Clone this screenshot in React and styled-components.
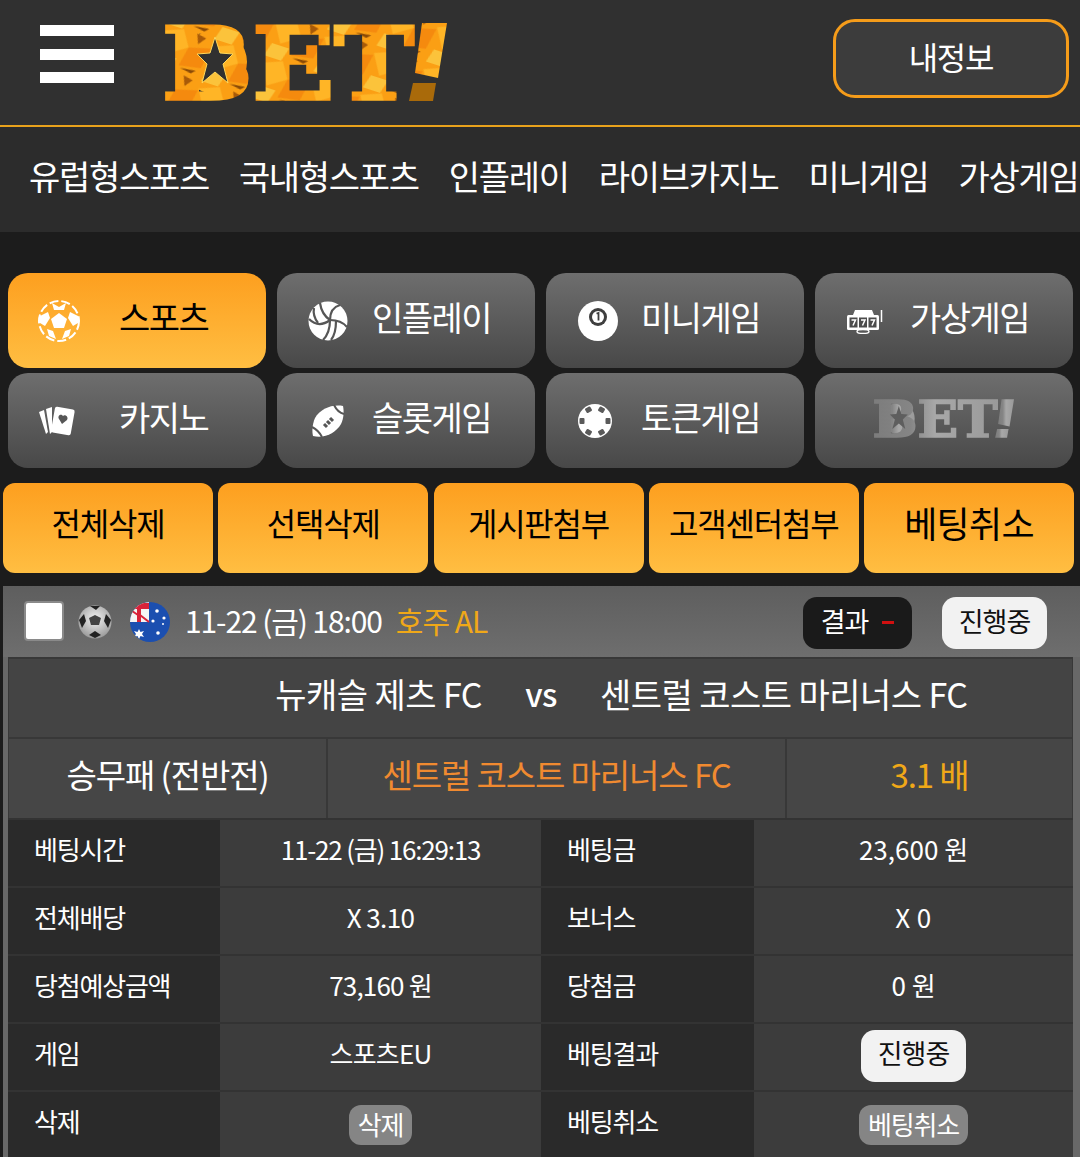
import React from "react";
import styled, { createGlobalStyle } from "styled-components";

const Global = createGlobalStyle`
  html, body { margin: 0; padding: 0; background: #1c1c1c; }
  body { font-family: "Noto Sans CJK KR", "Noto Sans", sans-serif; overflow: hidden; }
  * { box-sizing: border-box; }
`;

const Page = styled.div`
  width: 1080px;
  height: 1157px;
  overflow: hidden;
  background: #1c1c1c;
  color: #fff;
`;

const TopBar = styled.header`
  height: 127px;
  display: flex;
  align-items: flex-start;
  background: #303030;
  border-bottom: 2px solid #e8a21c;
  padding: 19px 11px 0 40px;
`;

const Burger = styled.div`
  width: 74px;
  height: 58px;
  margin-top: 6px;
  display: flex;
  flex-direction: column;
  justify-content: space-between;
  span { display: block; height: 11px; background: #fff; }
`;

const LogoSlot = styled.div`
  margin-left: 51px;
  margin-top: 4px;
  line-height: 0;
`;

const Profile = styled.button`
  margin-left: auto;
  width: 236px;
  height: 79px;
  padding: 0 0 6px;
  border: 3px solid #f59c1a;
  border-radius: 22px;
  background: #3c3c3c;
  color: #fff;
  font: 400 32px "Noto Sans CJK KR", sans-serif;
  letter-spacing: -1.2px;
`;

const Nav = styled.nav`
  height: 105px;
  background: #2c2c2c;
  display: flex;
  align-items: center;
  gap: 30px;
  padding: 0 0 8px 29px;
  white-space: nowrap;
  overflow: hidden;
`;

const NavItem = styled.a`
  font-size: 34px;
  letter-spacing: -1.3px;
  color: #fff;
  flex: none;
`;

const TabGrid = styled.section`
  display: grid;
  grid-template-columns: repeat(4, 258px);
  grid-auto-rows: 95px;
  column-gap: 11px;
  row-gap: 5px;
  padding: 41px 0 0 8px;
`;

const Tab = styled.div`
  border-radius: 20px;
  display: grid;
  grid-template-columns: ${(p) => p.$textAt || 95}px 1fr;
  align-items: center;
  padding-bottom: 8px;
  background: ${(p) =>
    p.$active
      ? "linear-gradient(#fd9f1f, #ffbe42)"
      : "linear-gradient(#6e6e6e, #484848)"};
  color: ${(p) => (p.$active ? "#000" : "#fff")};
  font-size: 34px;
  letter-spacing: -1.5px;
  svg {
    justify-self: start;
    margin-left: ${(p) => p.$iconAt || 31}px;
    margin-top: 8px;
  }
`;

const TabLabel = styled.span`
  text-align: left;
  line-height: 1;
`;

const LogoTab = styled.div`
  border-radius: 20px;
  background: linear-gradient(#6e6e6e, #484848);
  display: flex;
  align-items: center;
  justify-content: center;
  padding-bottom: 4px;
`;

const ActionRow = styled.div`
  display: grid;
  grid-template-columns: repeat(5, 210px);
  column-gap: 5.25px;
  padding: 15px 0 0 3px;
`;

const Action = styled.button`
  height: 90px;
  border: 0;
  padding: 0 0 12px;
  border-radius: 12px;
  background: linear-gradient(#fd9f1f, #ffbe42);
  color: #000;
  font: 400 ${(p) => p.$size || 32}px "Noto Sans CJK KR", sans-serif;
  letter-spacing: ${(p) => p.$ls ?? -1.2}px;
  white-space: nowrap;
`;

const Card = styled.section`
  margin: 13px 0 0 3px;
  padding: 0 7px 0 5px;
  background: #686868;
`;

const CardHead = styled.div`
  height: 71px;
  margin-left: -5px;
  margin-right: -7px;
  padding: 0 33px 0 21px;
  display: flex;
  align-items: center;
  background: linear-gradient(#5e5e5e, #6e6e6e);
`;

const Check = styled.span`
  width: 40px;
  height: 40px;
  flex: none;
  margin-top: -2px;
  background: #fff;
  border: 2px solid #8a8a8a;
  border-radius: 4px;
`;

const When = styled.span`
  margin-left: 14px;
  padding-bottom: 4px;
  font-size: 30px;
  letter-spacing: -1.1px;
  color: #fff;
`;

const League = styled.span`
  margin-left: 14px;
  padding-bottom: 4px;
  font-size: 30px;
  letter-spacing: -1px;
  color: #f0a818;
`;

const Pill = styled.span`
  height: 52px;
  width: ${(p) => p.$w}px;
  margin-left: ${(p) => p.$ml || "0"};
  margin-top: ${(p) => p.$mt || 0}px;
  display: inline-flex;
  align-items: center;
  justify-content: center;
  gap: 14px;
  border-radius: 14px;
  font-size: 27px;
  letter-spacing: -1px;
  background: ${(p) => p.$bg};
  color: ${(p) => p.$fg};
  flex: none;
  padding-bottom: 6px;
`;

const Dash = styled.i`
  width: 12px;
  height: 3px;
  margin-top: 4px;
  background: #d01010;
`;

const MatchRow = styled.div`
  height: 80px;
  display: grid;
  grid-template-columns: 473px 118px 1fr;
  align-items: center;
  background: #444;
  border-top: 2px solid #383838;
  border-left: 1px solid #383838;
  border-right: 1px solid #383838;
  font-size: 34px;
  letter-spacing: -0.55px;
  padding-bottom: 10px;
`;

const Home = styled.span`
  text-align: right;
`;

const Vs = styled.span`
  text-align: center;
  font-size: 32px;
  font-weight: 500;
`;

const PickRow = styled.div`
  height: 81px;
  display: grid;
  grid-template-columns: 317px 459px 1fr;
  border-top: 2px solid #383838;
  background: #383838;
  border-left: 1px solid #383838;
  border-right: 1px solid #383838;
`;

const PickCell = styled.div`
  display: flex;
  align-items: center;
  justify-content: center;
  background: #464646;
  margin-left: ${(p) => (p.$first ? 0 : 2)}px;
  color: ${(p) => p.$color || "#fff"};
  font-size: 33px;
  letter-spacing: -1.1px;
  padding-bottom: 10px;
`;

const Table = styled.div`
  display: grid;
  grid-template-columns: 212px 321px 213px 1fr;
  grid-auto-rows: 68px;
  background: #333;
`;

const Label = styled.div`
  background: #2a2a2a;
  display: flex;
  align-items: center;
  padding: 0 0 10px 26px;
  font-size: 26px;
  letter-spacing: -1.2px;
  border-top: 2px solid #333;
`;

const Value = styled.div`
  background: #3c3c3c;
  display: flex;
  align-items: center;
  justify-content: center;
  padding-bottom: 10px;
  font-size: 26px;
  letter-spacing: ${(p) => p.$ls ?? -1.2}px;
  border-top: 2px solid #333;
`;

const SmallBtn = styled.span`
  height: 40px;
  margin-top: 9px;
  padding: 0 9px 3px;
  display: inline-flex;
  align-items: center;
  border-radius: 12px;
  background: #858585;
  font-size: 26px;
  letter-spacing: -1.2px;
`;

const LogoSvg = styled.svg`
  overflow: visible;
`;

const Logo = ({ w, h, id, grey }) => (
  <LogoSvg width={w} height={h} viewBox="0 0 282 78">
    <defs>
      {grey ? (
        <linearGradient id={id} x1="0" x2="1" y1="0" y2="0">
          <stop offset="0" stopColor="#7c7c7c" />
          <stop offset="0.3" stopColor="#858585" />
          <stop offset="0.5" stopColor="#a8a8a8" />
          <stop offset="1" stopColor="#9a9a9a" />
        </linearGradient>
      ) : (
        <pattern id={id} width="52" height="44" patternUnits="userSpaceOnUse" patternTransform="rotate(18)">
          <rect width="52" height="44" fill="#fb9f14" />
          <path d="M0 8L20 0L30 16L12 28Z" fill="#ffb526" />
          <path d="M30 16L52 10L48 32L26 36Z" fill="#f58a0e" />
          <path d="M4 30L22 30L18 44L0 44Z" fill="#fbc33b" />
          <path d="M34 0L44 2L38 10Z" fill="#a85a08" />
          <path d="M28 38L44 36L40 40Z" fill="#8a4a06" />
        </pattern>
      )}
    </defs>
    <ellipse cx="50" cy="39" rx="32" ry="32" fill={`url(#${id})`} />
    <text
      x="-3"
      y="76"
      fontFamily="'DejaVu Serif', serif"
      fontWeight="700"
      fontSize="100"
      textLength="252"
      lengthAdjust="spacingAndGlyphs"
      fill={`url(#${id})`}
      stroke={`url(#${id})`}
      strokeWidth="3.5"
    >
      BET
    </text>
    <path d="M257 0H282L273 55L250 50Z" fill={`url(#${id})`} />
    <path d="M248 60H271L268 78H244Z" fill={grey ? `url(#${id})` : "#a96a0a"} />
    <path
      d="M50 14L55 30L68 31L58 41L63 60L50 49L37 60L42 41L32 31L45 30Z"
      fill={grey ? "#5e5e5e" : "#303030"}
      stroke={grey ? "none" : "#ffd75a"}
      strokeWidth="1"
    />
  </LogoSvg>
);

const Soccer = () => (
  <svg width="44" height="44" viewBox="0 0 44 44">
    <circle cx="22" cy="22" r="20" fill="none" stroke="#fff" strokeWidth="2" strokeDasharray="9 3" />
    <path d="M22 14L30 20L27 29H17L14 20Z" fill="#fff" />
    <path d="M15 4L22 8L29 4L27 11H17Z" fill="#fff" />
    <path d="M3 17L11 13L13 19L8 27L3 24Z" fill="#fff" />
    <path d="M41 17L33 13L31 19L36 27L41 24Z" fill="#fff" />
    <path d="M10 30L16 32L19 40L12 37Z" fill="#fff" />
    <path d="M34 30L28 32L25 40L32 37Z" fill="#fff" />
  </svg>
);

const Volley = () => (
  <svg width="40" height="42" viewBox="0 0 40 42">
    <circle cx="20" cy="21" r="19.5" fill="#fff" />
    <g fill="none" stroke="#565656" strokeWidth="2.2">
      <path d="M12 3C13 10 16 16 22 20" />
      <path d="M22 20C22 13 25 7 32 5" />
      <path d="M22 20C28 20 34 21 39 27" />
      <path d="M1 19C7 25 14 26 22 20" />
      <path d="M6 8C5 13 7 19 10 23" />
      <path d="M22 20C22 28 20 35 15 40" />
      <path d="M28 21C28 29 27 35 23 40" />
    </g>
  </svg>
);

const Cards = () => (
  <svg width="38" height="32" viewBox="0 0 38 32">
    <path d="M1 7L6 5L10 27L8 29Z" fill="#fff" />
    <path d="M8 4L14 2L14 27L12 29Z" fill="#fff" />
    <rect x="15" y="3" width="20" height="26" rx="2" fill="#fff" transform="rotate(10 25 15)" />
    <path d="M25 11C23 8 19 11 21 14L24 19L29 15C31 12 27 9 25 11Z" fill="#565656" />
  </svg>
);

const Football = () => (
  <svg width="36" height="36" viewBox="0 0 36 36">
    <path d="M33 3C22 1 10 6 5 15C2 22 2 29 3 33C14 36 26 30 31 21C34 15 34 8 33 3Z" fill="#fff" />
    <path d="M24 2C26 6 30 10 34 11M2 24C6 26 10 30 12 34" stroke="#565656" strokeWidth="2" fill="none" />
    <path d="M14 21L17 24M17 18L20 21M20 15L23 18" stroke="#565656" strokeWidth="3" />
  </svg>
);

const Pool = () => (
  <svg width="40" height="42" viewBox="0 0 40 42">
    <circle cx="20" cy="21" r="20" fill="#fff" />
    <circle cx="20" cy="17" r="9" fill="#3f3f3f" />
    <circle cx="20" cy="17" r="6" fill="#fff" />
    <path d="M18.5 13.5L20.5 13V20.5" stroke="#3f3f3f" strokeWidth="1.8" fill="none" />
  </svg>
);

const Slot = () => (
  <svg width="38" height="26" viewBox="0 0 38 26">
    <rect x="1" y="7" width="32" height="15" rx="1.5" fill="#fff" />
    <path d="M7 7L9 2H26L28 7Z" fill="#fff" />
    <path d="M35.5 2V14" stroke="#fff" strokeWidth="1.5" />
    <ellipse cx="17" cy="23.5" rx="6" ry="2" fill="none" stroke="#fff" strokeWidth="1.3" />
    <g fill="#4c4c4c">
      <rect x="3.5" y="9.5" width="8" height="10" />
      <rect x="13" y="9.5" width="8" height="10" />
      <rect x="22.5" y="9.5" width="8" height="10" />
    </g>
    <g fill="none" stroke="#fff" strokeWidth="1.5">
      <path d="M5.5 12H9.5L7 17.5" />
      <path d="M15 12H19L16.5 17.5" />
      <path d="M24.5 12H28.5L26 17.5" />
    </g>
  </svg>
);

const Chip = () => (
  <svg width="36" height="36" viewBox="0 0 36 36">
    <circle cx="18" cy="18" r="17" fill="#fff" />
    <g fill="#5a5a5a">
      {[0, 60, 120, 180, 240, 300].map((a) => (
        <rect key={a} x="15" y="2.5" width="6" height="5" rx="1" transform={`rotate(${a + 30} 18 18)`} />
      ))}
    </g>
  </svg>
);

const MiniBall = () => (
  <svg width="34" height="34" viewBox="0 0 34 34" style={{ flex: "none", marginLeft: 14 }}>
    <defs>
      <radialGradient id="mb" cx="0.5" cy="0.4" r="0.6">
        <stop offset="0" stopColor="#f4f4f4" />
        <stop offset="1" stopColor="#9a9a9a" />
      </radialGradient>
    </defs>
    <circle cx="17" cy="17" r="16.5" fill="url(#mb)" />
    <path d="M17 10L23 13L21 20H13L11 13Z" fill="#444" />
    <path d="M1 15L6 9L8 16L4 23Z" fill="#222" />
    <path d="M33 15L28 9L26 16L30 23Z" fill="#222" />
    <path d="M11 30L17 26L23 30L17 33Z" fill="#222" />
    <path d="M12 1L22 1L18 5Z" fill="#222" />
  </svg>
);

const Flag = () => (
  <svg width="42" height="42" viewBox="0 0 42 42" style={{ flex: "none", marginLeft: 17 }}>
    <defs>
      <clipPath id="fc">
        <circle cx="21" cy="21" r="20" />
      </clipPath>
    </defs>
    <g clipPath="url(#fc)">
      <rect width="42" height="42" fill="#1b4fb0" />
      <rect width="20" height="21" fill="#f4f4f4" />
      <path d="M0 2H20V8H12V21H8V8H0Z" fill="#d8233a" />
      <path d="M0 8L9 14M20 21L11 14" stroke="#d8233a" strokeWidth="2" />
      <path d="M10 28L11.5 31L15 30L13 33L15 36L11.5 35L10 38L8.5 35L5 36L7 33L5 30L8.5 31Z" fill="#fff" />
      <g fill="#fff">
        <circle cx="28" cy="10" r="1.8" />
        <circle cx="35" cy="17" r="1.6" />
        <circle cx="24" cy="20" r="1.6" />
        <circle cx="29" cy="32" r="1.8" />
        <circle cx="34" cy="23" r="1" />
      </g>
    </g>
  </svg>
);

const navItems = ["유럽형스포츠", "국내형스포츠", "인플레이", "라이브카지노", "미니게임", "가상게임"];

const rows = [
  ["베팅시간", "11-22 (금) 16:29:13", -1.2, "베팅금", "23,600 원", 0],
  ["전체배당", "X 3.10", -0.6, "보너스", "X 0", 0.4],
  ["당첨예상금액", "73,160 원", -0.8, "당첨금", "0 원", 0],
  ["게임", "스포츠EU", -0.8, "베팅결과", <Pill key="p" $w={105} $mt={7} $bg="#f2f2f2" $fg="#111">진행중</Pill>],
  ["삭제", <SmallBtn key="d">삭제</SmallBtn>, -1.2, "베팅취소", <SmallBtn key="c">베팅취소</SmallBtn>],
];

export default function App() {
  return (
    <Page>
      <Global />
      <TopBar>
        <Burger><span /><span /><span /></Burger>
        <LogoSlot><Logo w={282} h={78} id="logoMain" /></LogoSlot>
        <Profile>내정보</Profile>
      </TopBar>
      <Nav>
        {navItems.map((n) => <NavItem key={n}>{n}</NavItem>)}
      </Nav>
      <TabGrid>
        <Tab $active $textAt={111} $iconAt={29}>
          <Soccer />
          <TabLabel>스포츠</TabLabel>
        </Tab>
        <Tab><Volley /><TabLabel>인플레이</TabLabel></Tab>
        <Tab $iconAt={32}><Pool /><TabLabel>미니게임</TabLabel></Tab>
        <Tab><Slot /><TabLabel>가상게임</TabLabel></Tab>
        <Tab $textAt={111} $iconAt={30}><Cards /><TabLabel>카지노</TabLabel></Tab>
        <Tab $iconAt={33}><Football /><TabLabel>슬롯게임</TabLabel></Tab>
        <Tab><Chip /><TabLabel>토큰게임</TabLabel></Tab>
        <LogoTab><Logo w={140} h={39} id="logoGrey" grey /></LogoTab>
      </TabGrid>
      <ActionRow>
        <Action>전체삭제</Action>
        <Action>선택삭제</Action>
        <Action>게시판첨부</Action>
        <Action>고객센터첨부</Action>
        <Action $size={36} $ls={-0.7}>베팅취소</Action>
      </ActionRow>
      <Card>
        <CardHead>
          <Check />
          <MiniBall />
          <Flag />
          <When>11-22 (금) 18:00</When>
          <League>호주 AL</League>
          <Pill $w={109} $ml="auto" $mt={3} $bg="#1a1a1a" $fg="#fff">결과 <Dash /></Pill>
          <Pill $w={105} $ml="30px" $mt={3} $bg="#f2f2f2" $fg="#111">진행중</Pill>
        </CardHead>
        <MatchRow>
          <Home>뉴캐슬 제츠 FC</Home>
          <Vs>vs</Vs>
          <span>센트럴 코스트 마리너스 FC</span>
        </MatchRow>
        <PickRow>
          <PickCell $first>승무패 (전반전)</PickCell>
          <PickCell $color="#f08a30">센트럴 코스트 마리너스 FC</PickCell>
          <PickCell $color="#f0a818">3.1 배</PickCell>
        </PickRow>
        <Table>
          {rows.map((r, i) => (
            <React.Fragment key={i}>
              <Label>{r[0]}</Label>
              <Value $ls={r[2]}>{r[1]}</Value>
              <Label>{r[3]}</Label>
              <Value $ls={r[5]}>{r[4]}</Value>
            </React.Fragment>
          ))}
        </Table>
      </Card>
    </Page>
  );
}
